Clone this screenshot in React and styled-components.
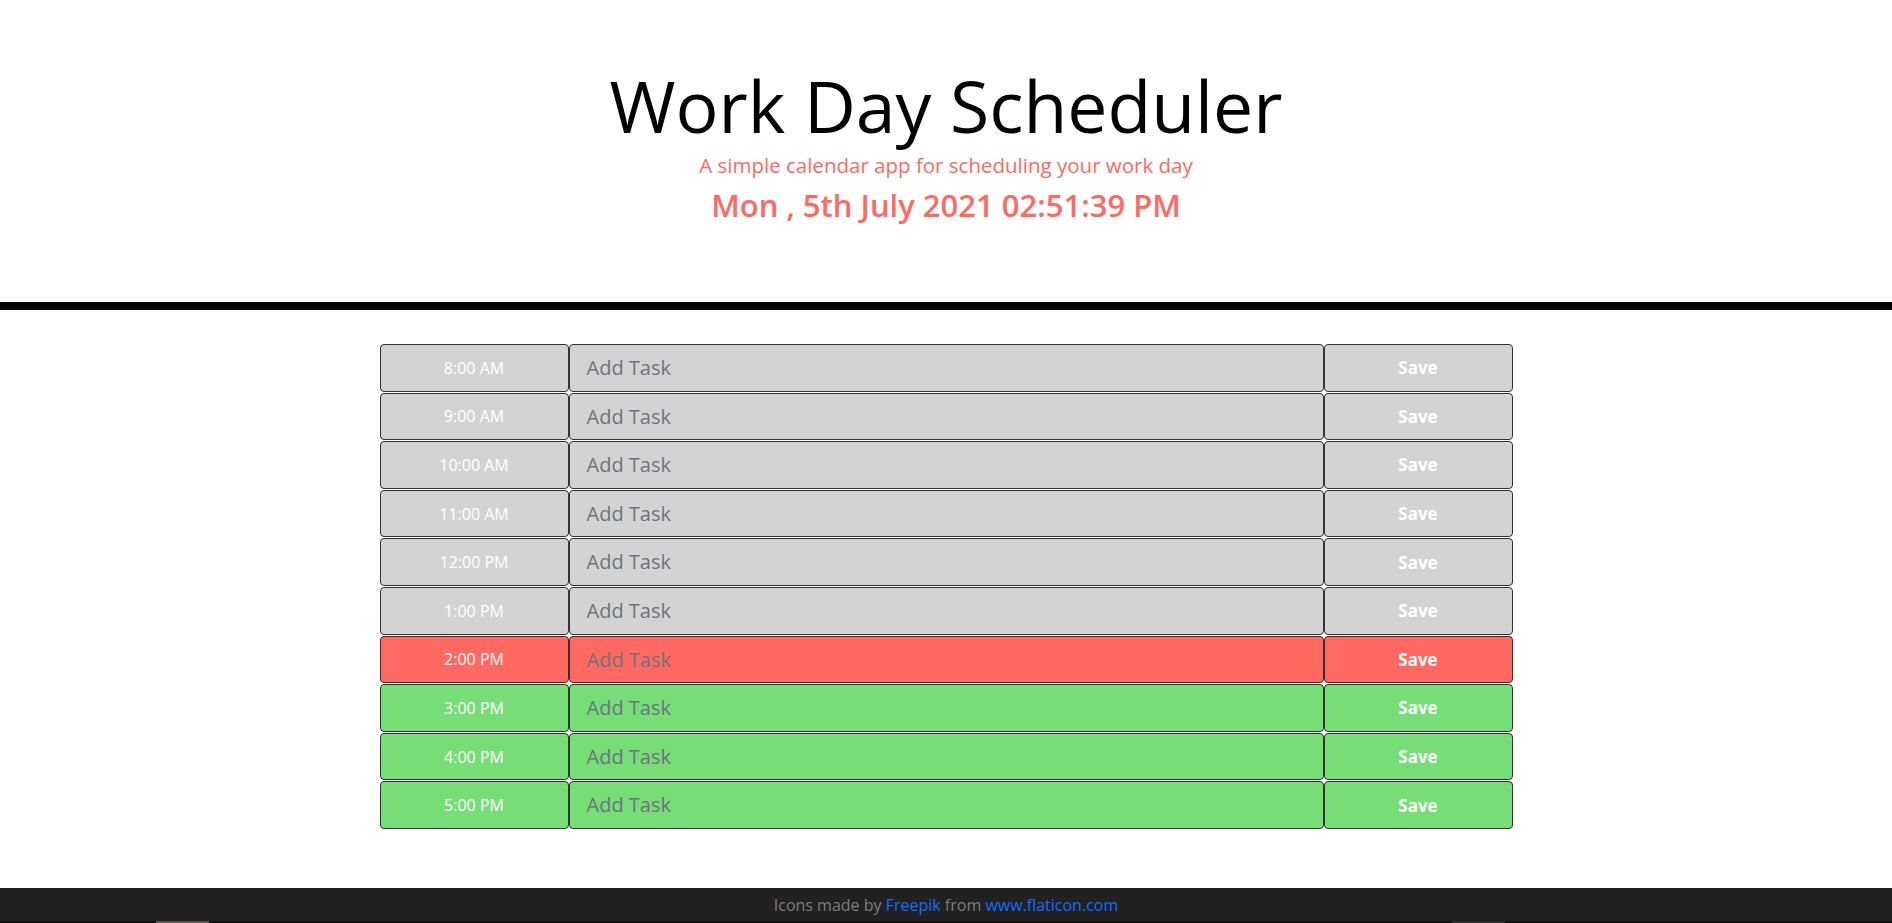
import styled, { createGlobalStyle } from 'styled-components';

const GlobalStyle = createGlobalStyle`
	body {
		margin: 0;
		font-family: 'Open Sans', 'Noto Sans', sans-serif;
		background: #fff;
		color: #212529;
	}
	* {
		box-sizing: border-box;
	}
`;

const hours = [
	'8:00 AM',
	'9:00 AM',
	'10:00 AM',
	'11:00 AM',
	'12:00 PM',
	'1:00 PM',
	'2:00 PM',
	'3:00 PM',
	'4:00 PM',
	'5:00 PM',
];

const CURRENT = 6;

function getState(i) {
	if (i < CURRENT) return 'past';
	if (i === CURRENT) return 'present';
	return 'future';
}

export default function App() {
	return (
		<>
			<GlobalStyle />
			<Header>
				<Title>Work Day Scheduler</Title>
				<Lead>A simple calendar app for scheduling your work day</Lead>
				<CurrentDay>Mon , 5th July 2021 02:51:39 PM</CurrentDay>
			</Header>
			<Divider />
			<Container>
				{hours.map((hour, i) => (
					<Row key={hour} $state={getState(i)}>
						<Hour>{hour}</Hour>
						<Task placeholder="Add Task" />
						<SaveBtn>Save</SaveBtn>
					</Row>
				))}
			</Container>
			<Footer>
				Icons made by <Link href="#">Freepik</Link> from <Link href="#">www.flaticon.com</Link>
			</Footer>
			<IconRow>
				<IconBox $color="#5d554d" />
				<IconBox $color="#2e2e2e" />
			</IconRow>
		</>
	);
}

const colors = {
	past: '#d3d3d3',
	present: '#ff6961',
	future: '#77dd77',
};

const Header = styled.header`
	padding: 63px 0 0;
	height: 302px;
	text-align: center;
`;

const Title = styled.h1`
	margin: 0;
	font-size: 71.5px;
	font-weight: 400;
	line-height: 86px;
	color: #000;
`;

const Lead = styled.p`
	margin: 1px 0 0;
	font-size: 20.5px;
	font-weight: 400;
	line-height: 30px;
	color: #ff6961;
`;

const CurrentDay = styled.p`
	margin: 7px 0 0;
	font-size: 31px;
	font-weight: 600;
	line-height: 37px;
	color: #ff6961;
`;

const Divider = styled.div`
	height: 8px;
	background: #000;
`;

const Container = styled.main`
	width: 1133px;
	margin: 34px auto 0;
	display: flex;
	flex-direction: column;
	gap: 1px;
`;

const Row = styled.div`
	display: grid;
	grid-template-columns: 189px 1fr 189px;
	height: 47.6px;
	background: #fff;

	& > * {
		background: ${(props) => colors[props.$state]};
		border: 1px solid #333;
		border-radius: 4px;
	}
`;

const Hour = styled.div`
	display: flex;
	align-items: center;
	justify-content: center;
	color: #fff;
	font-size: 16px;
`;

const Task = styled.textarea`
	resize: none;
	padding: 10px 17px;
	font-family: inherit;
	font-size: 20px;
	line-height: 26px;
	color: #495057;
	outline: none;
	overflow: hidden;

	&::placeholder {
		color: #6c757d;
	}
`;

const SaveBtn = styled.button`
	font-family: inherit;
	font-size: 17px;
	font-weight: 700;
	color: #fff;
	cursor: pointer;
`;

const Footer = styled.footer`
	margin-top: 59px;
	padding: 5px 0 4px;
	background: #212121;
	color: #7c7c7c;
	font-size: 16px;
	line-height: 24px;
	text-align: center;
`;

const Link = styled.a`
	color: #0d6efd;
	text-decoration: none;
`;

const IconRow = styled.div`
	display: flex;
	justify-content: space-between;
	padding: 0 387px 0 156px;
	height: 60px;
	background: #111;
`;

const IconBox = styled.div`
	width: 53px;
	height: 60px;
	background: ${(props) => props.$color};
`;
